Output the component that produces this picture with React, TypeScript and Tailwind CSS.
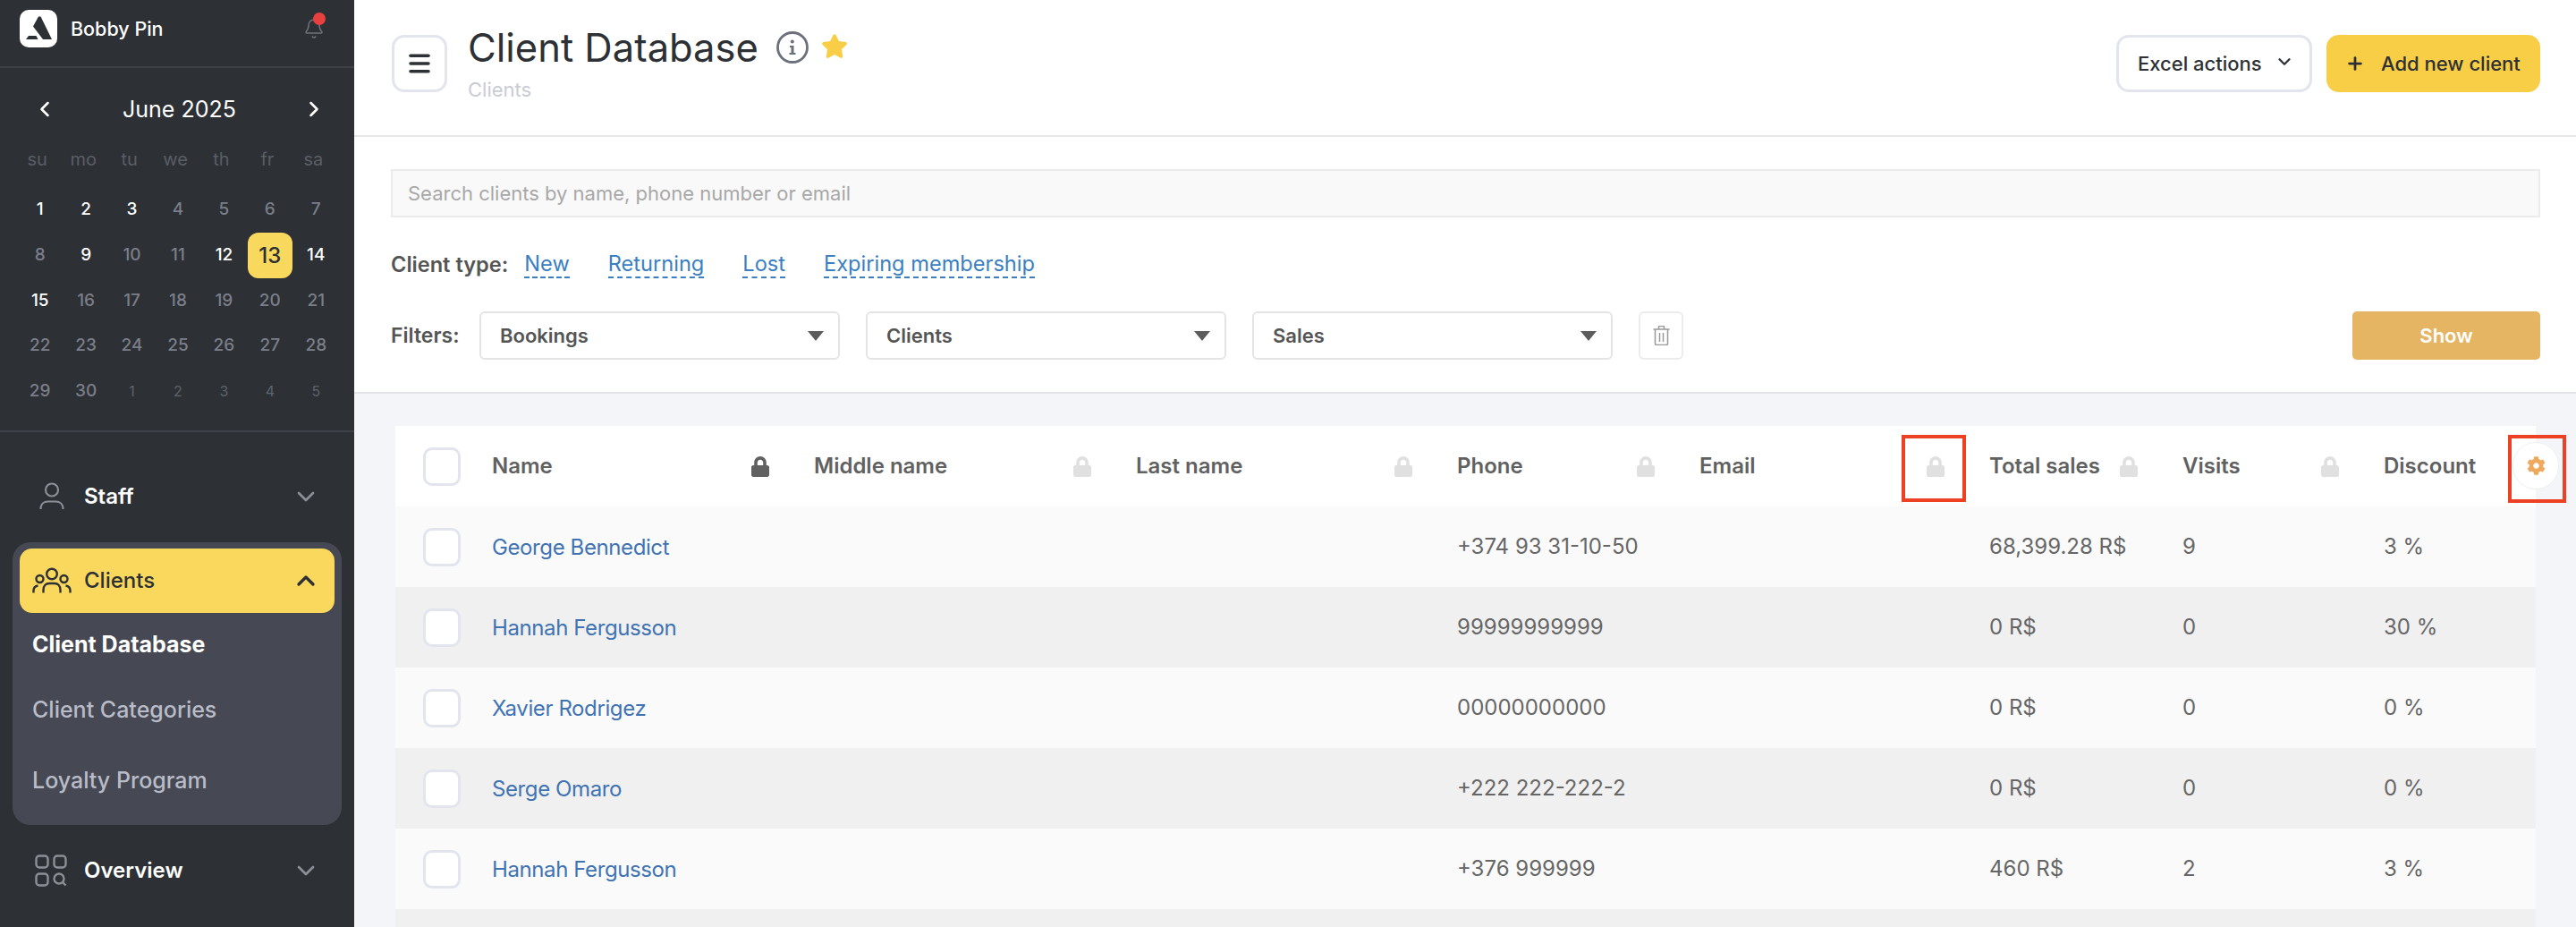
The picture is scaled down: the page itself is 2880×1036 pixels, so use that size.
import { Bell, ChevronDown, ChevronLeft, ChevronRight, ChevronUp, Menu, Plus } from 'lucide-react'
import { FaCog, FaLock, FaStar } from 'react-icons/fa'

const prevDays = [1, 2, 3, 4, 5, 6, 7, 8, 9, 10, 11, 12, 13, 14, 15, 16, 17, 18, 19, 20, 21, 22, 23, 24, 25, 26, 27, 28, 29, 30]
const activeDays = [1, 2, 3, 9, 12, 14, 15]
const weekDays = ['su', 'mo', 'tu', 'we', 'th', 'fr', 'sa']

const columns = [
  { label: 'Name', dark: true },
  { label: 'Middle name' },
  { label: 'Last name' },
  { label: 'Phone' },
  { label: 'Email' },
  { label: 'Total sales' },
  { label: 'Visits' },
  { label: 'Discount', noLock: true },
]

const clients = [
  { name: 'George Bennedict', phone: '+374 93 31-10-50', sales: '68,399.28 R$', visits: '9', discount: '3 %' },
  { name: 'Hannah Fergusson', phone: '99999999999', sales: '0 R$', visits: '0', discount: '30 %' },
  { name: 'Xavier Rodrigez', phone: '00000000000', sales: '0 R$', visits: '0', discount: '0 %' },
  { name: 'Serge Omaro', phone: '+222 222-222-2', sales: '0 R$', visits: '0', discount: '0 %' },
  { name: 'Hannah Fergusson', phone: '+376 999999', sales: '460 R$', visits: '2', discount: '3 %' },
]

const gridCols = 'grid grid-cols-[108px_360px_360px_359px_271px_324px_216px_225px_170px] items-center'

function Logo() {
  return (
    <div className="flex h-[42px] w-[42px] items-center justify-center rounded-[10px] bg-white">
      <svg viewBox="0 0 42 42" className="h-[42px] w-[42px]">
        <path d="M21 7.500h2.500L36 33H26L15 18.500Z" fill="#2d3034" />
        <path d="M10 29h8.500l2 4H7z" fill="#2d3034" />
      </svg>
    </div>
  )
}

function UserIcon() {
  return (
    <svg viewBox="0 0 28 32" fill="none" stroke="#8b8f97" strokeWidth="2.200" className="h-[32px] w-[28px]">
      <circle cx="14" cy="8.500" r="7" />
      <path d="M1.500 30c0-6 4-8.500 8-8.500h9c4 0 8 2.500 8 8.500" />
    </svg>
  )
}

function UsersIcon() {
  return (
    <svg viewBox="0 0 44 30" fill="none" stroke="#2d3034" strokeWidth="2.400" className="h-[30px] w-[44px]">
      <circle cx="22" cy="7.500" r="5.800" />
      <circle cx="8.500" cy="13" r="4" />
      <circle cx="35.500" cy="13" r="4" />
      <path d="M12.500 28.500v-3c0-5 3-7.500 6.500-7.500h6c3.500 0 6.500 2.500 6.500 7.500v3" />
      <path d="M1.500 28.500v-2.500c0-3 2-5 5-5.500M42.500 28.500v-2.500c0-3-2-5-5-5.500" />
    </svg>
  )
}

function OverviewIcon() {
  return (
    <svg viewBox="0 0 36 36" fill="none" stroke="#8b8f97" strokeWidth="2.400" className="h-[36px] w-[36px]">
      <rect x="1.500" y="1.500" width="13" height="13" rx="3.500" />
      <rect x="21.500" y="1.500" width="13" height="13" rx="3.500" />
      <rect x="1.500" y="21.500" width="13" height="13" rx="3.500" />
      <circle cx="27" cy="27" r="5.500" />
      <path d="M31 31l3.500 3.500" />
    </svg>
  )
}

function InfoIcon() {
  return (
    <svg viewBox="0 0 36 36" fill="none" className="h-[36px] w-[36px] shrink-0">
      <circle cx="18" cy="18" r="16.500" stroke="#6b707c" strokeWidth="2.800" />
      <circle cx="17.800" cy="11.500" r="2" fill="#6b707c" />
      <path d="M15 16h4.500v8H21.500v2h-7v-2h2v-6H15z" fill="#6b707c" />
    </svg>
  )
}

function TrashIcon() {
  return (
    <svg viewBox="0 0 19 22" fill="none" stroke="#999" strokeWidth="1.500" className="h-[22px] w-[19px]">
      <path d="M0.500 4h18M6.500 4V1.500a1 1 0 0 1 1-1h4a1 1 0 0 1 1 1V4" />
      <path d="M2.500 4v16a1.500 1.500 0 0 0 1.500 1.500h11a1.500 1.500 0 0 0 1.500-1.500V4" />
      <path d="M7.500 8v10M11.500 8v10" />
    </svg>
  )
}

function Select({ label }: { label: string }) {
  return (
    <div className="flex h-[54px] w-[403px] items-center justify-between rounded-[6px] border-2 border-[#e4e4e4] bg-white pl-[21px] pr-[16px]">
      <span className="text-[22px] font-semibold text-[#555]">{label}</span>
      <svg viewBox="0 0 18 11" className="h-[11px] w-[18px]">
        <path d="M0 0h18L9 11z" fill="#5c5c5c" />
      </svg>
    </div>
  )
}

function Checkbox() {
  return <div className="h-[43px] w-[42px] rounded-[10px] border-[3px] border-[#e2e5ee] bg-white" />
}

function Calendar() {
  return (
    <div className="h-[407px] border-b-2 border-[#3e4147] pt-[30px]">
      <div className="flex h-[32px] items-center justify-between pl-[36px] pr-[31px] text-white">
        <ChevronLeft className="h-[28px] w-[28px]" strokeWidth={2.200} />
        <span className="text-[25px] leading-none">June 2025</span>
        <ChevronRight className="h-[28px] w-[28px]" strokeWidth={2.200} />
      </div>
      <div className="ml-[19px] mr-[17px] mt-[22px] grid grid-cols-7 text-center">
        {weekDays.map(d => (
          <div key={d} className="flex h-[36px] items-center justify-center pr-[6px] text-[20px] text-[#5a5e66]">
            {d}
          </div>
        ))}
      </div>
      <div className="ml-[19px] mr-[17px] mt-[13px] grid grid-cols-7 grid-rows-[51px_51px_50px_51px_50px] text-center">
        {prevDays.map(d => {
          if (d === 13) {
            return (
              <div key={d} className="flex items-center justify-center">
                <span className="flex h-[51px] w-[50px] items-center justify-center rounded-[12px] bg-[#f9d85e] text-[24px] font-medium text-[#2d3034]">
                  {d}
                </span>
              </div>
            )
          }
          const on = activeDays.includes(d)
          return (
            <div
              key={d}
              className={`flex items-center justify-center text-[19px] font-medium ${on ? 'text-white' : 'text-[#7b7f8a]'}`}
            >
              {d}
            </div>
          )
        })}
        {[1, 2, 3, 4, 5].map(d => (
          <div key={d} className="flex items-center justify-center text-[16px] text-[#5f636b]">
            {d}
          </div>
        ))}
      </div>
    </div>
  )
}

function Sidebar() {
  return (
    <aside className="flex w-[396px] shrink-0 flex-col bg-[#2d3034]">
      <div className="flex h-[76px] items-center justify-between border-b-2 border-[#3e4147] pb-[10px] pl-[22px] pr-[33px]">
        <div className="flex items-center gap-[15px]">
          <Logo />
          <span className="text-[21.500px] font-medium text-white">Bobby Pin</span>
        </div>
        <div className="relative">
          <Bell className="h-[24px] w-[24px] text-[#6f737b]" strokeWidth={1.500} />
          <span className="absolute -right-[1px] -top-[6px] h-[14px] w-[14px] rounded-full bg-[#e8403c]" />
        </div>
      </div>
      <Calendar />
      <nav className="flex flex-col px-[14px] pt-[37px]">
        <div className="flex h-[70px] items-center justify-between pl-[30px] pr-[24px]">
          <div className="flex items-center gap-[22px]">
            <UserIcon />
            <span className="text-[24px] font-semibold text-white">Staff</span>
          </div>
          <ChevronDown className="h-[32px] w-[32px] text-[#8b8f97]" strokeWidth={2} />
        </div>
        <div className="mt-[16px] h-[316px] rounded-[20px] bg-[#464953] px-[8px] pt-[7px]">
          <div className="flex h-[72px] items-center justify-between rounded-[14px] bg-[#fad85d] pl-[14px] pr-[16px]">
            <div className="flex items-center gap-[14px]">
              <UsersIcon />
              <span className="text-[24px] font-medium text-[#2d3034]">Clients</span>
            </div>
            <ChevronUp className="h-[32px] w-[32px] text-[#2d3034]" strokeWidth={2.500} />
          </div>
          <div className="pl-[14px]">
            <div className="mt-[18px] h-[34px] text-[25px] font-bold leading-[34px] text-white">Client Database</div>
            <div className="mt-[39px] h-[34px] text-[25px] font-medium leading-[34px] text-[#b9bcc8]">Client Categories</div>
            <div className="mt-[45px] h-[34px] text-[25px] font-medium leading-[34px] text-[#b9bcc8]">Loyalty Program</div>
          </div>
        </div>
        <div className="mt-[16px] flex h-[70px] items-center justify-between pl-[25px] pr-[24px]">
          <div className="flex items-center gap-[19px]">
            <OverviewIcon />
            <span className="text-[24px] font-semibold text-white">Overview</span>
          </div>
          <ChevronDown className="h-[32px] w-[32px] text-[#8b8f97]" strokeWidth={2} />
        </div>
      </nav>
    </aside>
  )
}

function PageHeader() {
  return (
    <header className="flex h-[153px] items-start justify-between border-b-2 border-[#e6e6e6] bg-white pl-[42px] pr-[40px] pt-[39px]">
      <div className="flex items-start gap-[23px]">
        <button className="flex h-[64px] w-[62px] items-center justify-center rounded-[14px] border-[3px] border-[#e2e5ee] bg-white">
          <Menu className="h-[30px] w-[30px] text-[#2d3034]" strokeWidth={2.800} />
        </button>
        <div className="-mt-[11px]">
          <div className="flex items-center gap-[20px]">
            <h1 className="text-[43.500px] font-normal leading-[50px] text-[#2d3034]">Client Database</h1>
            <InfoIcon />
            <FaStar className="-ml-[6px] -mt-[4px] h-[29px] w-[30px] text-[#f8ce47]" />
          </div>
          <div className="mt-[9px] text-[22px] leading-[26px] text-[#c9ccd3]">Clients</div>
        </div>
      </div>
      <div className="flex items-center gap-[16px]">
        <button className="flex h-[64px] w-[219px] items-center justify-between rounded-[14px] border-[3px] border-[#e2e5ee] bg-white pl-[21px] pr-[17px]">
          <span className="text-[22px] font-medium text-[#2d3034]">Excel actions</span>
          <ChevronDown className="-mt-[4px] h-[22px] w-[22px] text-[#2d3034]" strokeWidth={2.500} />
        </button>
        <button className="flex h-[64px] w-[239px] items-center gap-[18px] rounded-[14px] bg-[#f8ce47] pl-[21px]">
          <Plus className="h-[22px] w-[22px] text-[#2d3034]" strokeWidth={3} />
          <span className="text-[22px] font-medium text-[#2d3034]">Add new client</span>
        </button>
      </div>
    </header>
  )
}

function Filters() {
  return (
    <section className="h-[287px] border-b-2 border-[#e3e4e8] bg-white pl-[41px] pr-[40px] pt-[36px]">
      <div className="flex h-[54px] items-center border-2 border-[#ebebeb] bg-[#f9f9f9] pl-[17px] text-[22px] text-[#a8a8a8]">
        Search clients by name, phone number or email
      </div>
      <div className="mt-[35px] flex h-[36px] items-center text-[23.600px]">
        <span className="mr-[18px] font-semibold text-[#555]">Client type:</span>
        {['New', 'Returning', 'Lost', 'Expiring membership'].map(t => (
          <span key={t} className="mr-[43px] border-b-2 border-dashed border-[#3a7fc1] leading-[28px] text-[#3a7fc1]">
            {t}
          </span>
        ))}
      </div>
      <div className="mt-[34px] flex items-center">
        <span className="w-[99px] text-[23px] font-semibold text-[#555]">Filters:</span>
        <div className="flex items-center gap-[29px]">
          <Select label="Bookings" />
          <Select label="Clients" />
          <Select label="Sales" />
          <div className="flex h-[54px] w-[50px] items-center justify-center rounded-[6px] border-2 border-[#ececec] bg-white">
            <TrashIcon />
          </div>
        </div>
        <button className="ml-auto h-[54px] w-[210px] rounded-[5px] bg-[#e5b563] text-[22px] font-semibold text-white">
          Show
        </button>
      </div>
    </section>
  )
}

function ClientTable() {
  return (
    <div className="relative ml-[46px] mt-[36px] w-[2393px]">
      <div className={`${gridCols} h-[90px] bg-white`}>
        <div className="pl-[31px]">
          <Checkbox />
        </div>
        {columns.map(c => (
          <div key={c.label} className="flex items-center justify-between pr-[50px] text-[24px] font-semibold text-[#616161]">
            {c.label}
            {!c.noLock && <FaLock className={`h-[23px] w-[20px] ${c.dark ? 'text-[#616161]' : 'text-[#e0e0e0]'}`} />}
          </div>
        ))}
      </div>
      {clients.map((c, i) => (
        <div key={i} className={`${gridCols} h-[90px] text-[24px] text-[#666] ${i % 2 ? 'bg-[#f0f0f0]' : 'bg-[#fafafa]'}`}>
          <div className="pl-[31px]">
            <Checkbox />
          </div>
          <div className="pt-[2px] tracking-[-0.4px] text-[#3f73b3]">{c.name}</div>
          <div />
          <div />
          <div>{c.phone}</div>
          <div />
          <div>{c.sales}</div>
          <div>{c.visits}</div>
          <div>{c.discount}</div>
        </div>
      ))}
      <div className="h-[90px] bg-[#f0f0f0]" />

      {/* settings button and the red annotation boxes sit over the header */}
      <div className="absolute left-[2367px] top-[18px] flex h-[53px] w-[52px] items-center justify-center rounded-full border border-[#f0f0f0] bg-white">
        <FaCog className="h-[21px] w-[21px] text-[#efa95c]" />
      </div>
      <div className="absolute left-[1684px] top-[10px] h-[75px] w-[72px] border-[4px] border-[#ee4023]" />
      <div className="absolute left-[2362px] top-[10px] h-[76px] w-[65px] border-[4px] border-[#ee4023]" />
    </div>
  )
}

export default function App() {
  return (
    <div className="flex h-[1036px] w-[2880px] overflow-hidden bg-white font-['Inter',sans-serif]">
      <Sidebar />
      <main className="min-w-0 flex-1 bg-[#f4f5f9]">
        <PageHeader />
        <Filters />
        <ClientTable />
      </main>
    </div>
  )
}
